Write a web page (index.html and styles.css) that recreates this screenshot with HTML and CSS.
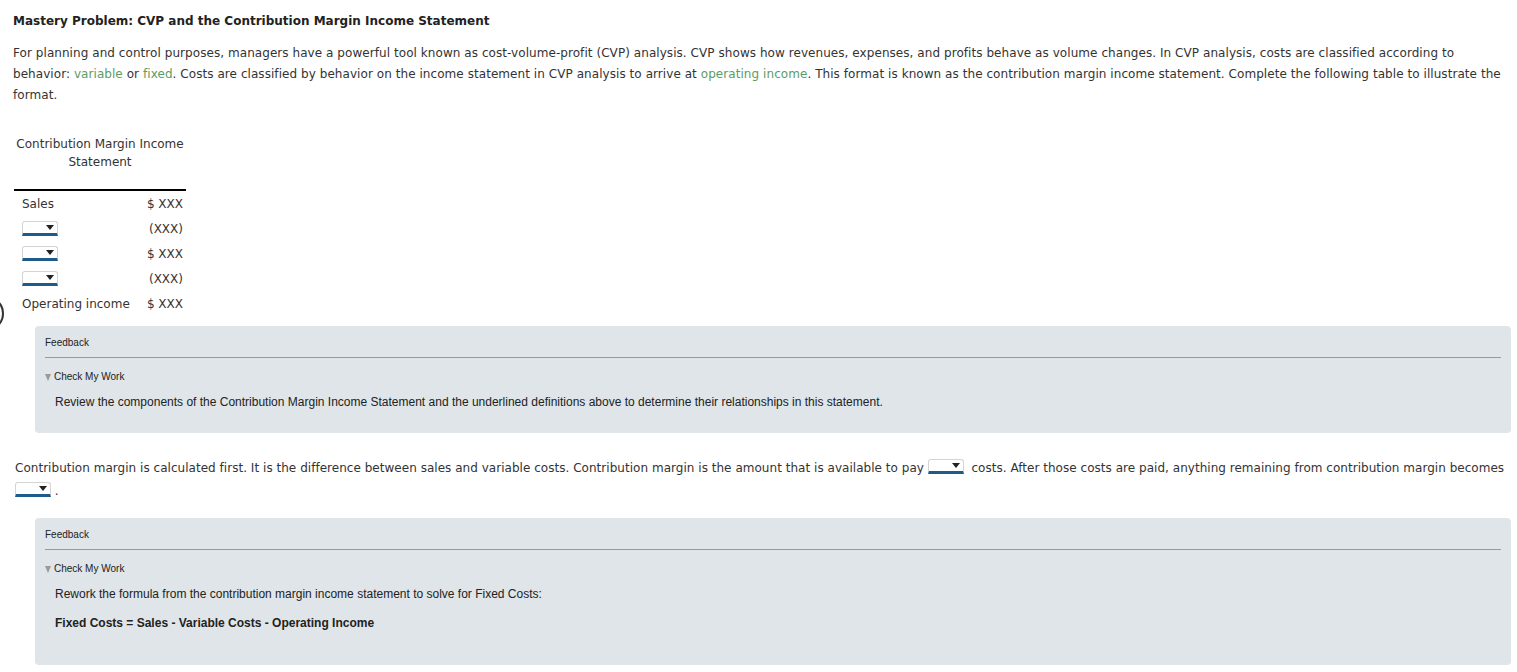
FILE: index.html
```html
<!DOCTYPE html>
<html>
<head>
<meta charset="utf-8">
<link rel="stylesheet" href="styles.css">
</head>
<body>
<div class="page">
  <span class="edge-circle"></span>
  <h1 class="title">Mastery Problem: CVP and the Contribution Margin Income Statement</h1>
  <p class="intro">For planning and control purposes, managers have a powerful tool known as cost-volume-profit (CVP) analysis. CVP shows how revenues, expenses, and profits behave as volume changes. In CVP analysis, costs are classified according to behavior: <span class="term">variable</span> or <span class="term">fixed</span>. Costs are classified by behavior on the income statement in CVP analysis to arrive at <span class="term">operating income</span>. This format is known as the contribution margin income statement. Complete the following table to illustrate the format.</p>

  <table class="stmt">
    <thead>
      <tr><th colspan="2" class="stmt-head">Contribution Margin Income Statement</th></tr>
    </thead>
    <tbody>
      <tr><td class="lbl">Sales</td><td class="amt">$ XXX</td></tr>
      <tr><td class="lbl"><span class="dd"></span></td><td class="amt">(XXX)</td></tr>
      <tr><td class="lbl"><span class="dd"></span></td><td class="amt">$ XXX</td></tr>
      <tr><td class="lbl"><span class="dd"></span></td><td class="amt">(XXX)</td></tr>
      <tr><td class="lbl">Operating income</td><td class="amt">$ XXX</td></tr>
    </tbody>
  </table>

  <div class="feedback fb1">
    <div class="fb-title">Feedback</div>
    <div class="fb-body">
      <div class="fb-toggle"><span class="tri"></span>Check My Work</div>
      <p class="fb-text">Review the components of the Contribution Margin Income Statement and the underlined definitions above to determine their relationships in this statement.</p>
    </div>
  </div>

  <p class="q2">Contribution margin is calculated first. It is the difference between sales and variable costs. Contribution margin is the amount that is available to pay <span class="dd inline"></span> &nbsp;costs. After those costs are paid, anything remaining from contribution margin becomes <span class="dd inline"></span> .</p>

  <div class="feedback fb2">
    <div class="fb-title">Feedback</div>
    <div class="fb-body">
      <div class="fb-toggle"><span class="tri"></span>Check My Work</div>
      <p class="fb-text">Rework the formula from the contribution margin income statement to solve for Fixed Costs:</p>
      <p class="fb-text fb-bold">Fixed Costs = Sales - Variable Costs - Operating Income</p>
    </div>
  </div>
</div>
</body>
</html>
```

FILE: styles.css
```css
html, body {
  margin: 0;
  padding: 0;
  background: #ffffff;
}

.page {
  position: relative;
  padding: 13px 6px 0 13px;
  font-family: "DejaVu Sans", Verdana, sans-serif;
  font-size: 12px;
  color: #333333;
}

.edge-circle {
  position: absolute;
  left: -22px;
  top: 298px;
  width: 22px;
  height: 27px;
  border: 2.5px solid #333;
  border-radius: 50%;
}

.title {
  margin: 0;
  font-size: 12px;
  font-weight: bold;
  line-height: 16px;
  color: #222222;
}

.intro {
  margin: 14px 0 0 0;
  line-height: 21px;
  letter-spacing: 0.06px;
}

.term {
  color: #5c9c63;
}

.stmt {
  margin: 29px 0 0 1px;
  border-collapse: collapse;
  width: 172px;
}

.stmt-head {
  font-weight: normal;
  text-align: center;
  line-height: 18px;
  padding: 0 2px 18px 2px;
  border-bottom: 2px solid #000;
}

.stmt td {
  height: 25px;
  padding: 0;
  vertical-align: middle;
}

.lbl {
  padding-left: 8px !important;
  text-align: left;
}

.amt {
  text-align: right;
  padding-right: 3px !important;
}

.dd {
  display: inline-block;
  position: relative;
  width: 34px;
  height: 11px;
  border: 1px solid #d4d4d4;
  border-bottom: 3px solid #1f5b8a;
  border-radius: 3px 3px 0 0;
  background: #fff;
  vertical-align: middle;
}

.dd::after {
  content: "";
  position: absolute;
  right: 3px;
  top: 3px;
  border-left: 4px solid transparent;
  border-right: 4px solid transparent;
  border-top: 5px solid #222;
}

.dd.inline {
  vertical-align: -2px;
}

.feedback {
  font-family: "Liberation Sans", Arial, sans-serif;
  background: #dfe5e8;
  border-radius: 4px;
  margin: 10px 0 0 22px;
  padding: 0 10px 23px 10px;
  color: #222;
}

.fb-title {
  font-size: 10px;
  line-height: 14px;
  padding: 10px 0 7px 0;
  border-bottom: 1px solid #999;
}

.fb-toggle {
  font-size: 10px;
  line-height: 14px;
  margin-top: 12px;
  display: flex;
  align-items: center;
}

.tri {
  display: inline-block;
  width: 0;
  height: 0;
  border-left: 3px solid transparent;
  border-right: 3px solid transparent;
  border-top: 7px solid #9a9a9a;
  margin-right: 3px;
}

.fb-text {
  margin: 10px 0 0 10px;
  font-size: 12px;
  line-height: 16px;
}

.fb-bold {
  font-weight: bold;
  margin-top: 13px;
}

.q2 {
  margin: 24px 0 0 2px;
  line-height: 23px;
  letter-spacing: 0.03px;
}

.fb2 {
  margin-top: 15px;
  padding-bottom: 34px;
}
```
